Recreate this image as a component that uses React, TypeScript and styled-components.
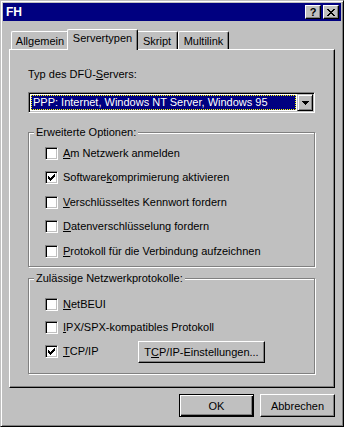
import React from 'react';
import styled, { createGlobalStyle } from 'styled-components';

const GlobalStyle = createGlobalStyle`
  body {
    margin: 0;
    background: #c0c0c0;
  }
  * {
    box-sizing: border-box;
  }
`;

const Window = styled.div`
  width: 344px;
  height: 427px;
  display: flex;
  flex-direction: column;
  padding: 2px;
  background: #c0c0c0;
  border: 1px solid;
  border-color: #c0c0c0 #000 #000 #c0c0c0;
  box-shadow: inset 1px 1px #fff, inset -1px -1px #808080;
  font-family: 'Liberation Sans', Arial, sans-serif;
  font-size: 11px;
  color: #000;
`;

const TitleBar = styled.div`
  height: 18px;
  display: flex;
  align-items: center;
  padding: 0 2px 0 3px;
  background: #000080;
  color: #fff;
  font-weight: bold;
`;

const TitleText = styled.span`
  flex: 1;
  font-size: 12px;
  line-height: 14px;
`;

const TitleButton = styled.button`
  width: 16px;
  height: 14px;
  margin-left: 2px;
  padding: 0;
  display: flex;
  align-items: center;
  justify-content: center;
  background: #c0c0c0;
  border: 1px solid;
  border-color: #fff #000 #000 #fff;
  box-shadow: inset -1px -1px #808080;
  font-family: inherit;
  font-size: 11px;
  font-weight: bold;
  color: #000;
  line-height: 11px;
`;

const TabRow = styled.div`
  height: 20px;
  margin-top: 8px;
  padding-left: 8px;
  display: flex;
  align-items: flex-end;
  position: relative;
  z-index: 1;
`;

const Tab = styled.div<{ $active?: boolean; $w: number }>`
  width: ${(p) => p.$w}px;
  height: ${(p) => (p.$active ? 21 : 18)}px;
  margin: ${(p) => (p.$active ? '0 -2px -1px' : '0')};
  padding: ${(p) => (p.$active ? '0 0 3px' : '2px 0 0')};
  position: relative;
  z-index: ${(p) => (p.$active ? 2 : 1)};
  display: flex;
  align-items: center;
  justify-content: center;
  background: #c0c0c0;
  border-top: 1px solid #fff;
  border-left: 1px solid #fff;
  border-right: 1px solid #000;
  border-radius: 2px 2px 0 0;
  box-shadow: inset -1px 0 #808080;
  line-height: 13px;
`;

const Panel = styled.div`
  height: 339px;
  margin: 0 6px;
  padding: 18px 19px 0 18px;
  border: 1px solid;
  border-color: #fff #000 #000 #fff;
  box-shadow: inset -1px -1px #808080;
`;

const FieldLabel = styled.div`
  line-height: 13px;
  margin-bottom: 11px;
`;

const Key = styled.span`
  text-decoration: underline;
`;

const Combo = styled.div`
  height: 21px;
  display: flex;
  padding: 1px;
  background: #fff;
  border: 1px solid;
  border-color: #808080 #fff #fff #808080;
  box-shadow: inset 1px 1px #000, inset -1px -1px #c0c0c0;
`;

const ComboValue = styled.div`
  flex: 1;
  padding: 1px;
  background: #fff;
  display: flex;
`;

const Selection = styled.div`
  flex: 1;
  padding-left: 1px;
  background: #000080;
  border: 1px dotted #ffff00;
  color: #fff;
  line-height: 13px;
  white-space: nowrap;
  overflow: hidden;
`;

const DropButton = styled.div`
  width: 16px;
  display: flex;
  align-items: center;
  justify-content: center;
  background: #c0c0c0;
  border: 1px solid;
  border-color: #c0c0c0 #000 #000 #c0c0c0;
  box-shadow: inset 1px 1px #fff, inset -1px -1px #808080;
`;

const Group = styled.fieldset<{ $top: number }>`
  width: 287px;
  margin: ${(p) => p.$top}px 0 0;
  padding: 0;
  border: 1px solid #808080;
  box-shadow: 1px 1px #fff, inset 1px 1px #fff;
`;

const Legend = styled.legend`
  margin-left: 5px;
  padding: 0 2px;
  line-height: 13px;
  background: #c0c0c0;
`;

const GroupBody = styled.div<{ $pad: string }>`
  padding: ${(p) => p.$pad};
`;

const CheckRow = styled.div<{ $h: number }>`
  height: ${(p) => p.$h}px;
  display: flex;
  align-items: center;
`;

const CheckLabel = styled.label<{ $w?: number }>`
  display: flex;
  align-items: center;
  width: ${(p) => (p.$w ? `${p.$w}px` : 'auto')};
  line-height: 13px;
`;

const Box = styled.span`
  width: 13px;
  height: 13px;
  margin-right: 5px;
  display: flex;
  align-items: center;
  justify-content: center;
  background: #fff;
  border: 1px solid;
  border-color: #808080 #fff #fff #808080;
  box-shadow: inset 1px 1px #000, inset -1px -1px #c0c0c0;
`;

const Button = styled.button<{ $w: number; $h: number; $default?: boolean }>`
  width: ${(p) => p.$w}px;
  height: ${(p) => p.$h}px;
  padding: 0;
  background: #c0c0c0;
  border: 1px solid;
  border-color: ${(p) => (p.$default ? '#000' : '#fff #000 #000 #fff')};
  box-shadow: ${(p) =>
    p.$default
      ? 'inset 1px 1px #fff, inset -1px -1px #000, inset -2px -2px #808080'
      : 'inset -1px -1px #808080'};
  font-family: inherit;
  font-size: 11px;
  color: #000;
`;

const ButtonRow = styled.div`
  margin: 6px 6px 0 0;
  display: flex;
  justify-content: flex-end;
  gap: 6px;
`;

const CheckMark = () => (
  <svg width="7" height="7" viewBox="0 0 7 7" shapeRendering="crispEdges">
    <path
      fill="#000"
      d="M0 2h1v3H0z M1 3h1v3H1z M2 4h1v3H2z M3 3h1v3H3z M4 2h1v3H4z M5 1h1v3H5z M6 0h1v3H6z"
    />
  </svg>
);

const CloseGlyph = () => (
  <svg width="8" height="7" viewBox="0 0 8 7" shapeRendering="crispEdges">
    <path
      fill="#000"
      d="M0 0h2v1H0z M6 0h2v1H6z M1 1h2v1H1z M5 1h2v1H5z M2 2h4v1H2z M3 3h2v1H3z M2 4h4v1H2z M1 5h2v1H1z M5 5h2v1H5z M0 6h2v1H0z M6 6h2v1H6z"
    />
  </svg>
);

const DownArrow = () => (
  <svg width="7" height="4" viewBox="0 0 7 4" shapeRendering="crispEdges">
    <path fill="#000" d="M0 0h7v1H0z M1 1h5v1H1z M2 2h3v1H2z M3 3h1v1H3z" />
  </svg>
);

type CheckT = {
  children: React.ReactNode;
  checked?: boolean;
  h?: number;
  w?: number;
  after?: React.ReactNode;
};

const Check = ({ children, checked, h = 24.5, w, after }: CheckT) => (
  <CheckRow $h={h}>
    <CheckLabel $w={w}>
      <Box>{checked && <CheckMark />}</Box>
      <span>{children}</span>
    </CheckLabel>
    {after}
  </CheckRow>
);

const tabs = [
  { label: 'Allgemein', w: 58 },
  { label: 'Servertypen', w: 71, active: true },
  { label: 'Skript', w: 42 },
  { label: 'Multilink', w: 51 },
];

const App = () => {
  return (
    <>
      <GlobalStyle />
      <Window>
        <TitleBar>
          <TitleText>FH</TitleText>
          <TitleButton>?</TitleButton>
          <TitleButton>
            <CloseGlyph />
          </TitleButton>
        </TitleBar>

        <TabRow>
          {tabs.map((t) => (
            <Tab key={t.label} $w={t.w} $active={t.active}>
              {t.label}
            </Tab>
          ))}
        </TabRow>

        <Panel>
          <FieldLabel>
            Typ des DFÜ-<Key>S</Key>ervers:
          </FieldLabel>
          <Combo>
            <ComboValue>
              <Selection>PPP: Internet, Windows NT Server, Windows 95</Selection>
            </ComboValue>
            <DropButton>
              <DownArrow />
            </DropButton>
          </Combo>

          <Group $top={13}>
            <Legend>Erweiterte Optionen:</Legend>
            <GroupBody $pad="2px 0 2.5px 16px">
              <Check>
                <Key>A</Key>m Netzwerk anmelden
              </Check>
              <Check checked>
                Software<Key>k</Key>omprimierung aktivieren
              </Check>
              <Check>
                <Key>V</Key>erschlüsseltes Kennwort fordern
              </Check>
              <Check>
                <Key>D</Key>atenverschlüsselung fordern
              </Check>
              <Check>
                <Key>P</Key>rotokoll für die Verbindung aufzeichnen
              </Check>
            </GroupBody>
          </Group>

          <Group $top={5}>
            <Legend>Zulässige Netzwerkprotokolle:</Legend>
            <GroupBody $pad="7px 0 9px 16px">
              <Check h={24}>
                <Key>N</Key>etBEUI
              </Check>
              <Check h={23}>
                <Key>I</Key>PX/SPX-kompatibles Protokoll
              </Check>
              <Check
                h={25}
                checked
                w={93}
                after={
                  <Button $w={127} $h={22}>
                    T<Key>C</Key>P/IP-Einstellungen...
                  </Button>
                }
              >
                <Key>T</Key>CP/IP
              </Check>
            </GroupBody>
          </Group>
        </Panel>

        <ButtonRow>
          <Button $w={75} $h={23} $default>
            OK
          </Button>
          <Button $w={75} $h={23}>
            Abbrechen
          </Button>
        </ButtonRow>
      </Window>
    </>
  );
};

export default App;
